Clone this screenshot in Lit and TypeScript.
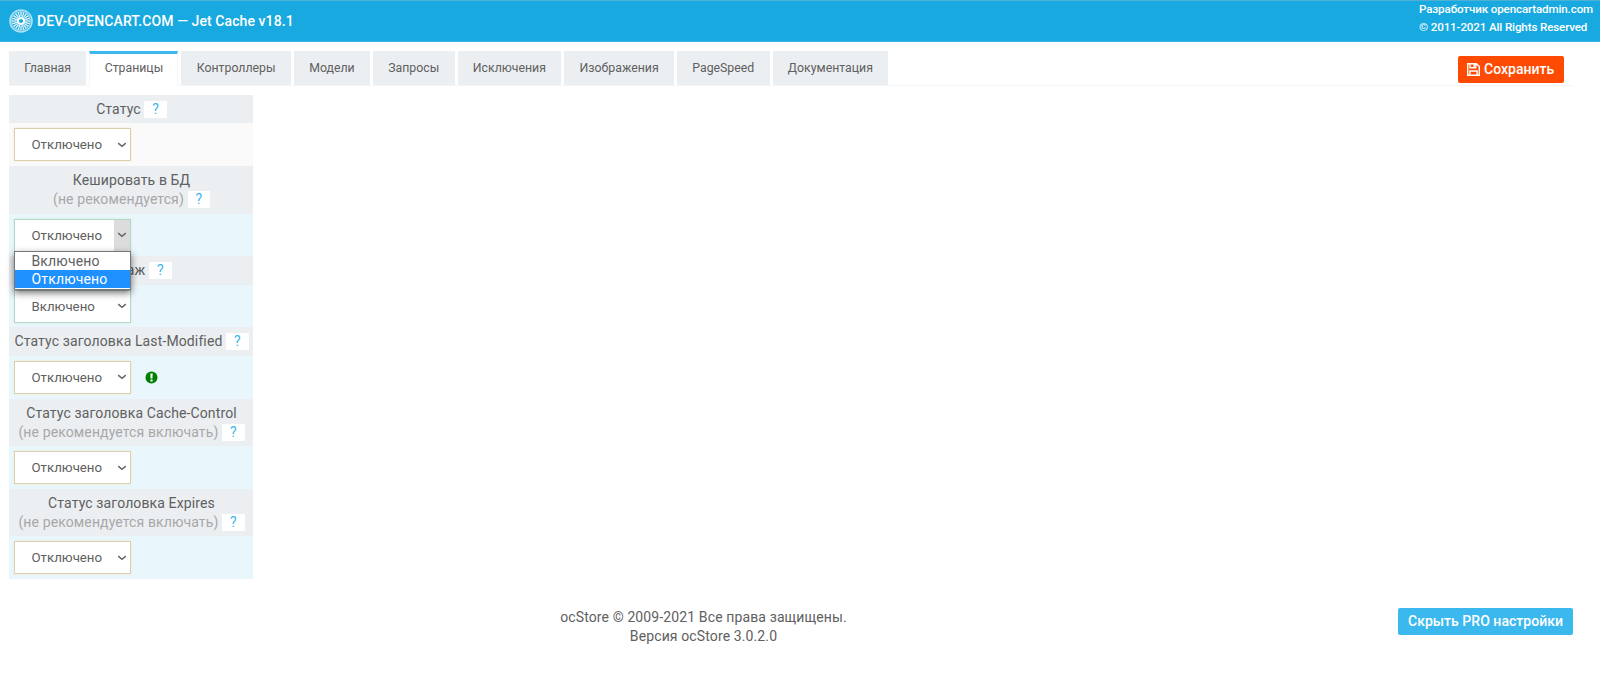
import { LitElement, html, css, svg, nothing } from "lit";
import { customElement } from "lit/decorators.js";
import { classMap } from "lit/directives/class-map.js";

type Setting = {
  title: string;
  note?: string;
  value: string;
  tone: "sand" | "mint";
  plain?: boolean;
  open?: boolean;
  info?: boolean;
};

const TABS = ["Главная", "Страницы", "Контроллеры", "Модели", "Запросы", "Исключения", "Изображения", "PageSpeed", "Документация"];

const SETTINGS: Setting[] = [
  { title: "Статус", value: "Отключено", tone: "sand", plain: true },
  { title: "Кешировать в БД", note: "(не рекомендуется)", value: "Отключено", tone: "mint", open: true },
  { title: "Монтаж", value: "Включено", tone: "mint" },
  { title: "Статус заголовка Last-Modified", value: "Отключено", tone: "sand", info: true },
  { title: "Статус заголовка Cache-Control", note: "(не рекомендуется включать)", value: "Отключено", tone: "sand" },
  { title: "Статус заголовка Expires", note: "(не рекомендуется включать)", value: "Отключено", tone: "sand" },
];

@customElement("setting-row")
export class SettingRow extends LitElement {
  static properties = { setting: { attribute: false } };
  declare setting: Setting;

  static styles = css`
    :host { display: block; }
    .head {
      box-sizing: border-box;
      height: 28.3px;
      padding: 5px 0 0 1px;
      background: #ebeff2;
      text-align: center;
      line-height: 19px;
      white-space: nowrap;
    }
    .head.tall { height: 47.5px; }
    .note { display: block; color: #a8a8a8; }
    .help {
      display: inline-block;
      width: 22.5px;
      height: 17px;
      line-height: 17px;
      background: #fff;
      color: #3bb6ec;
      font-size: 14px;
      letter-spacing: 0;
    }
    .body {
      display: flex;
      align-items: flex-start;
      box-sizing: border-box;
      height: 42.8px;
      padding: 5px 5px 0 5px;
      background: #e9f6fb;
    }
    .body.plain { background: #fafafa; }
    .select {
      position: relative;
      display: flex;
      align-items: center;
      justify-content: space-between;
      box-sizing: border-box;
      width: 117px;
      height: 33px;
      padding-left: 16.5px;
      border: 1px solid #dccfae;
      background: #fff;
      box-shadow: 0 0 2px #f3e8cd;
      font-size: 13.25px;
      letter-spacing: 0;
    }
    .select.mint { border-color: #b5d6c4; box-shadow: 0 0 2px #d3eee0; }
    .arrow {
      display: flex;
      align-items: center;
      justify-content: center;
      width: 16px;
      height: 31px;
    }
    .arrow.pressed { background: #dcdcdc; }
    .menu {
      position: absolute;
      z-index: 2;
      top: 31.4px;
      left: -1px;
      width: 115px;
      padding-bottom: 1px;
      border: 1px solid #777;
      background: #fff;
      box-shadow: 0 3px 7px rgba(0, 0, 0, 0.55);
      font-size: 14px;
      letter-spacing: 0.15px;
      line-height: 18px;
    }
    .option { padding-left: 16.5px; }
    .option.on { background: #1e90ff; color: #fff; }
    .info { margin: 10px 0 0 13.5px; }
  `;

  render() {
    const s = this.setting;
    const help = html`<span class="help">?</span>`;
    return html`
      <div class=${classMap({ head: true, tall: !!s.note })}>
        ${s.title}${s.note ? html`<span class="note">${s.note} ${help}</span>` : html` ${help}`}
      </div>
      <div class=${classMap({ body: true, plain: !!s.plain })}>
        <div class=${classMap({ select: true, mint: s.tone === "mint" })}>
          <span>${s.value}</span>
          <span class=${classMap({ arrow: true, pressed: !!s.open })}>
            <svg width="10" height="6" viewBox="0 0 10 6"><path d="M1.2 1.2 L5 4.3 L8.8 1.2" fill="none" stroke="#666" stroke-width="1.5" /></svg>
          </span>
          ${s.open
            ? html`<div class="menu">
                <div class="option">Включено</div>
                <div class="option on">Отключено</div>
              </div>`
            : nothing}
        </div>
        ${s.info
          ? html`<svg class="info" width="13" height="13" viewBox="0 0 13 13">
              <circle cx="6.5" cy="6.5" r="6" fill="#008000" />
              <path d="M5.3 2.4 H7.7 L7.4 7.6 H5.6 Z M5.4 8.5 H7.6 V10.5 H5.4 Z" fill="#fff" />
            </svg>`
          : nothing}
      </div>
    `;
  }
}

@customElement("app-root")
export class AppRoot extends LitElement {
  static styles = css`
    :host {
      display: block;
      box-sizing: border-box;
      height: 675px;
      overflow: hidden;
      background: #fff;
      color: #606060;
      font-family: Roboto, "Open Sans", sans-serif;
      font-size: 14px;
      letter-spacing: 0.12px;
    }
    .top {
      display: flex;
      justify-content: space-between;
      box-sizing: border-box;
      height: 42px;
      padding: 0 4px 0 9px;
      border-top: 1px solid #4fb0d6;
      border-bottom: 1px solid #3db5e4;
      background: #17a9df;
      color: #fff;
    }
    .brand {
      display: flex;
      align-items: center;
      gap: 4px;
      font-weight: 500;
      letter-spacing: 0.08px;
    }
    .credit {
      width: 177px;
      font-size: 11.6px;
      font-weight: 500;
      line-height: 17.5px;
      letter-spacing: -0.13px;
      white-space: nowrap;
    }
    .bar {
      display: flex;
      justify-content: space-between;
      box-sizing: border-box;
      height: 34.5px;
      margin: 9px 27px 0 9px;
      border-bottom: 1.5px solid #f5f5f5;
    }
    .tabs { display: flex; gap: 3px; }
    .tab {
      box-sizing: border-box;
      height: 34px;
      padding: 0 15.3px;
      background: #ebeff2;
      font-size: 12.3px;
      line-height: 34px;
      letter-spacing: 0;
    }
    .tab.active {
      height: 35px;
      padding: 0 14.3px;
      border: 1px solid #f5f5f5;
      border-top: 3px solid #3bb9ee;
      border-bottom: 0;
      background: #fff;
      line-height: 28px;
    }
    .save {
      display: flex;
      align-items: center;
      gap: 4px;
      box-sizing: border-box;
      width: 106px;
      height: 27px;
      margin: 5px 9px 0 0;
      padding: 0 0 1px 9px;
      border-radius: 2px;
      background: #ff4a03;
      color: #fff;
      font-weight: 500;
      letter-spacing: 0.03px;
    }
    .settings { width: 244px; margin: 9.5px 0 0 9px; }
    .foot {
      display: flex;
      padding: 28.8px 27px 0 9px;
    }
    .legal {
      flex: 1;
      text-align: center;
      line-height: 19px;
    }
    .pro {
      box-sizing: border-box;
      width: 175px;
      height: 27px;
      border-radius: 2px;
      background: #3bb9ee;
      color: #fff;
      font-weight: 500;
      letter-spacing: 0.03px;
      line-height: 26px;
      text-align: center;
      white-space: nowrap;
    }
  `;

  render() {
    const spokes = Array.from({ length: 20 }, (_, i) => i * 18);
    return html`
      <header class="top">
        <div class="brand">
          <svg width="24" height="24" viewBox="0 0 24 24" fill="none" stroke="#fff">
            <circle cx="12" cy="12" r="11" stroke-width="1.6" stroke-opacity="0.65" />
            <circle cx="12" cy="12" r="9.3" stroke-width="0.8" stroke-opacity="0.8" />
            ${spokes.map((a) => svg`<path d="M12 7.6 V3" transform="rotate(${a} 12 12)" stroke-width="1.1" />`)}
            <circle cx="12" cy="12" r="3.1" stroke-width="2" />
          </svg>
          <span>DEV-OPENCART.COM — Jet Cache v18.1</span>
        </div>
        <div class="credit">Разработчик opencartadmin.com<br />© 2011-2021 All Rights Reserved</div>
      </header>
      <nav class="bar">
        <div class="tabs">
          ${TABS.map((t, i) => html`<div class=${classMap({ tab: true, active: i === 1 })}>${t}</div>`)}
        </div>
        <div class="save">
          <svg width="13" height="13" viewBox="0 0 13 13" fill="none" stroke="#fff" stroke-width="1.4">
            <path d="M0.7 0.7 H9.4 L12.3 3.6 V12.3 H0.7 Z M3 0.7 V4.8 H8.8 V0.7 M2.9 12.3 V8 H10.1 V12.3 M7.2 1 V4" />
          </svg>
          <span>Сохранить</span>
        </div>
      </nav>
      <main class="settings">
        ${SETTINGS.map((s) => html`<setting-row .setting=${s}></setting-row>`)}
      </main>
      <footer class="foot">
        <div class="legal">ocStore © 2009-2021 Все права защищены.<br />Версия ocStore 3.0.2.0</div>
        <div class="pro">Скрыть PRO настройки</div>
      </footer>
    `;
  }
}
